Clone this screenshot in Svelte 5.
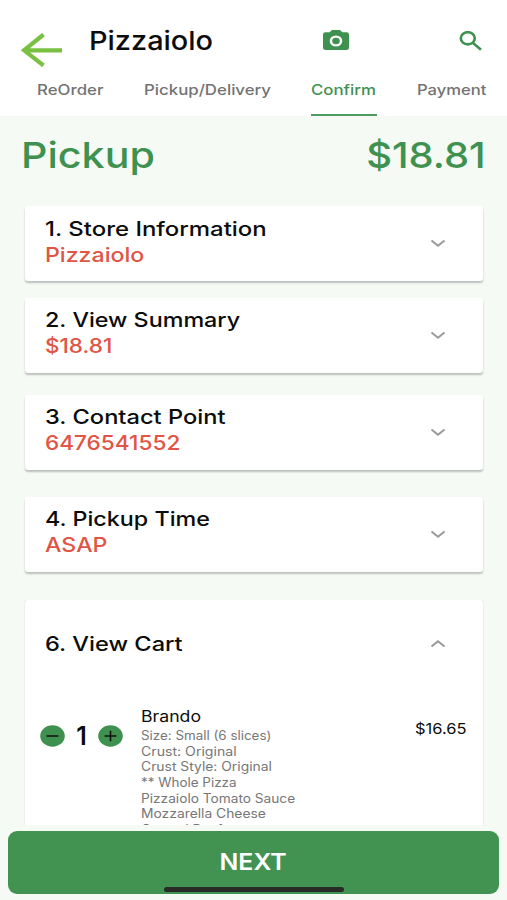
<script>
	let active = "Confirm";
	let quantity = 1;

	const tabs = [
		{ name: "ReOrder", key: "reorder" },
		{ name: "Pickup/Delivery", key: "delivery" },
		{ name: "Confirm", key: "confirm" },
		{ name: "Payment", key: "payment" },
	];

	// stretch: horizontal scale of the title and of the value
	const sections = [
		{ title: "1. Store Information", value: "Pizzaiolo", key: "store", stretch: [1.197, 1.157] },
		{ title: "2. View Summary", value: "$18.81", key: "summary", stretch: [1.165, 1.125] },
		{ title: "3. Contact Point", value: "6476541552", key: "contact", stretch: [1.182, 1.13] },
		{ title: "4. Pickup Time", value: "ASAP", key: "time", stretch: [1.165, 1.157] },
	];

	const details = [
		{ text: "Size: Small (6 slices)", stretch: 1.07 },
		{ text: "Crust: Original", stretch: 1.13 },
		{ text: "Crust Style: Original", stretch: 1.11 },
		{ text: "** Whole Pizza", stretch: 1.075 },
		{ text: "Pizzaiolo Tomato Sauce", stretch: 1.095 },
		{ text: "Mozzarella Cheese", stretch: 1.107 },
		{ text: "Ground Beef", stretch: 1.09 },
	];

	function decrease() {
		if (quantity > 1) quantity -= 1;
	}
</script>

<main>
	<header>
		<div class="bar">
			<button class="back" aria-label="Back">
				<svg width="42" height="34" viewBox="0 0 42 34">
					<path d="M22.500 1.500 3 17.300 22.500 32.500M3 17.300H41" />
				</svg>
			</button>
			<h1><span class="wide">Pizzaiolo</span></h1>
			<button class="camera" aria-label="Camera">
				<svg width="26" height="20" viewBox="0 0 26 20">
					<path
						fill-rule="evenodd"
						d="M9 0h8l2.400 2.200h4.200Q26 2.200 26 4.400v13.400Q26 20 23.600 20H2.400Q0 20 0 17.800V4.400Q0 2.200 2.400 2.200h4.200zM13 5.500a6.300 5.500 0 1 0 0 11a6.300 5.500 0 1 0 0-11zM13 7.700a3.800 3.300 0 1 1 0 6.600a3.800 3.300 0 1 1 0-6.600z"
					/>
				</svg>
			</button>
			<button class="search" aria-label="Search">
				<svg width="23" height="20" viewBox="0 0 23 20">
					<ellipse cx="8.800" cy="7.300" rx="7" ry="6.100" />
					<path d="M13.500 11.500 22 18.800" />
				</svg>
			</button>
		</div>
		<nav>
			{#each tabs as tab}
				<button
					class="tab {tab.key}"
					class:active={tab.name === active}
					on:click={() => (active = tab.name)}
					><span class="wide">{tab.name}</span></button
				>
			{/each}
		</nav>
	</header>

	<div class="total">
		<span class="wide method">Pickup</span>
		<span class="wide amount">$18.81</span>
	</div>

	<!-- Order sections -->
	{#each sections as section}
		<section class="card {section.key}">
			<div>
				<h2>
					<span class="wide" style="--stretch: {section.stretch[0]}"
						>{section.title}</span
					>
				</h2>
				<p>
					<span class="wide" style="--stretch: {section.stretch[1]}"
						>{section.value}</span
					>
				</p>
			</div>
			<svg class="chevron" width="16" height="9" viewBox="0 0 16 9">
				<path d="M1.500 1.500 8 6.800 14.500 1.500" />
			</svg>
		</section>
	{/each}

	<!-- Cart -->
	<section class="cart">
		<div class="cart-head">
			<h2><span class="wide">6. View Cart</span></h2>
			<svg class="chevron" width="16" height="9" viewBox="0 0 16 9">
				<path d="M1.500 7.500 8 2.200 14.500 7.500" />
			</svg>
		</div>
		<div class="item">
			<div class="stepper">
				<button aria-label="Remove one" on:click={decrease}>
					<svg width="25" height="22" viewBox="0 0 25 22">
						<ellipse cx="12.500" cy="11" rx="12.300" ry="10.700" />
						<path d="M6.500 11h12" />
					</svg>
				</button>
				<span>{quantity}</span>
				<button aria-label="Add one" on:click={() => (quantity += 1)}>
					<svg width="25" height="22" viewBox="0 0 25 22">
						<ellipse cx="12.500" cy="11" rx="12.300" ry="10.700" />
						<path d="M6.500 11h12M12.500 5.800v10.400" />
					</svg>
				</button>
			</div>
			<div class="info">
				<h3><span class="wide">Brando</span></h3>
				{#each details as line}
					<div class="line">
						<span class="wide" style="--stretch: {line.stretch}">{line.text}</span>
					</div>
				{/each}
			</div>
			<div class="price"><span class="wide">$16.65</span></div>
		</div>
	</section>

	<footer>
		<button class="next"><span class="wide">NEXT</span></button>
		<div class="indicator"></div>
	</footer>
</main>

<style>
	:global(body) {
		margin: 0;
	}

	main {
		display: flex;
		flex-direction: column;
		width: 507px;
		height: 900px;
		overflow: hidden;
		background: #f5faf5;
		font-family: Inter, "Noto Sans", sans-serif;
		color: #0c0c0c;
		--stretch: 1.16;
	}

	h1,
	h2,
	h3,
	p {
		margin: 0;
		font-weight: 500;
	}

	button {
		padding: 0;
		border: 0;
		background: none;
		font-family: inherit;
	}

	svg {
		display: block;
	}

	.wide {
		display: inline-block;
		vertical-align: top;
		white-space: nowrap;
		transform: scaleX(var(--stretch));
		transform-origin: 0 50%;
	}

	header {
		flex: none;
		height: 116px;
		background: #fff;
	}

	.bar {
		display: flex;
		height: 76px;
		align-items: flex-start;
	}

	.back {
		margin: 33px 0 0 21px;
	}

	.back path {
		fill: none;
		stroke: #7ac143;
		stroke-width: 4.2;
	}

	h1 {
		width: 233px;
		margin: 25px 0 0 26px;
		font-size: 26px;
		line-height: 32px;
		--stretch: 1.112;
	}

	.camera {
		margin: 30px 0 0 1px;
		fill: #3f9150;
	}

	.search {
		margin: 31px 0 0 110px;
		fill: none;
		stroke: #3f9150;
		stroke-width: 2.6;
	}

	nav {
		display: flex;
		height: 40px;
		padding-left: 36.6px;
	}

	.tab {
		flex: none;
		height: 40px;
		padding-bottom: 11px;
		box-sizing: border-box;
		border-bottom: 2px solid transparent;
		font-size: 14.5px;
		font-weight: 500;
		line-height: 28px;
		text-align: left;
		color: #737373;
	}

	.tab.reorder {
		width: 107.2px;
	}

	.tab.delivery {
		width: 167.2px;
	}

	.tab.confirm {
		width: 66px;
		margin-right: 39.6px;
	}

	.tab.payment {
		--stretch: 1.145;
	}

	.tab.active {
		border-color: #4f9c62;
		color: #3f9150;
	}

	.total {
		display: flex;
		flex: none;
		justify-content: space-between;
		height: 90px;
		padding: 0 21px 0 21px;
		box-sizing: border-box;
		font-size: 36px;
		font-weight: 500;
		line-height: 79px;
		color: #3f9150;
	}

	.method {
		--stretch: 1.145;
	}

	.amount {
		--stretch: 1.11;
		transform-origin: 100% 50%;
	}

	.card,
	.cart {
		flex: none;
		width: 458px;
		margin-left: 25px;
		box-sizing: border-box;
		border-radius: 3px;
		background: #fff;
		box-shadow: 0 2px 2px rgba(0, 0, 0, 0.23);
	}

	.card {
		display: flex;
		justify-content: space-between;
		align-items: center;
		height: 75px;
		padding: 0 37px 0 20px;
	}

	.card > div {
		margin-top: -4px;
	}

	.card.store {
		margin-bottom: 16.6px;
	}

	.card.summary {
		margin-bottom: 22.2px;
	}

	.card.contact {
		margin-bottom: 27.2px;
	}

	.card.time {
		margin-bottom: 28px;
	}

	h2 {
		font-size: 20px;
		line-height: 26px;
		--stretch: 1.18;
	}

	.card p {
		font-size: 20px;
		line-height: 26px;
		color: #e05545;
	}

	.chevron {
		fill: none;
		stroke: #999;
		stroke-width: 2;
	}

	.cart {
		height: 225px;
		overflow: hidden;
		border-radius: 3px 3px 0 0;
		box-shadow: 0 0 2px rgba(0, 0, 0, 0.14);
		clip-path: inset(0 -3px 0 -3px);
	}

	.cart-head {
		display: flex;
		justify-content: space-between;
		align-items: center;
		height: 88px;
		padding: 0 37px 0 20px;
	}

	.item {
		display: flex;
		margin-top: 19px;
	}

	.stepper {
		display: flex;
		align-items: center;
		justify-content: space-between;
		width: 83px;
		height: 22px;
		margin: 18px 0 0 15px;
	}

	.stepper span {
		font-size: 25px;
		font-weight: 600;
	}

	.stepper ellipse {
		fill: #3f9150;
	}

	.stepper path {
		fill: none;
		stroke: #111;
		stroke-width: 1.6;
	}

	.info {
		width: 260px;
		margin-left: 18px;
	}

	h3 {
		margin-bottom: 1px;
		font-size: 15.5px;
		font-weight: 400;
		line-height: 20px;
		--stretch: 1.14;
	}

	.line {
		font-size: 12.5px;
		line-height: 15.7px;
		color: #777;
	}

	.price {
		margin: 12px 0 0 14px;
		font-size: 15px;
		line-height: 20px;
		--stretch: 1.1;
	}

	footer {
		position: relative;
		flex: none;
		margin: 6px 8px 0;
	}

	.next {
		display: block;
		width: 491px;
		height: 63px;
		border-radius: 9px;
		background: #429351;
		font-size: 23px;
		font-weight: 600;
		line-height: 61px;
		color: #fff;
		--stretch: 1.08;
	}

	.next .wide {
		transform-origin: 50% 50%;
	}

	/* system home bar lies over the button */
	.indicator {
		position: absolute;
		left: 156px;
		bottom: 2px;
		width: 180px;
		height: 5px;
		border-radius: 3px;
		background: #292b29;
	}
</style>
